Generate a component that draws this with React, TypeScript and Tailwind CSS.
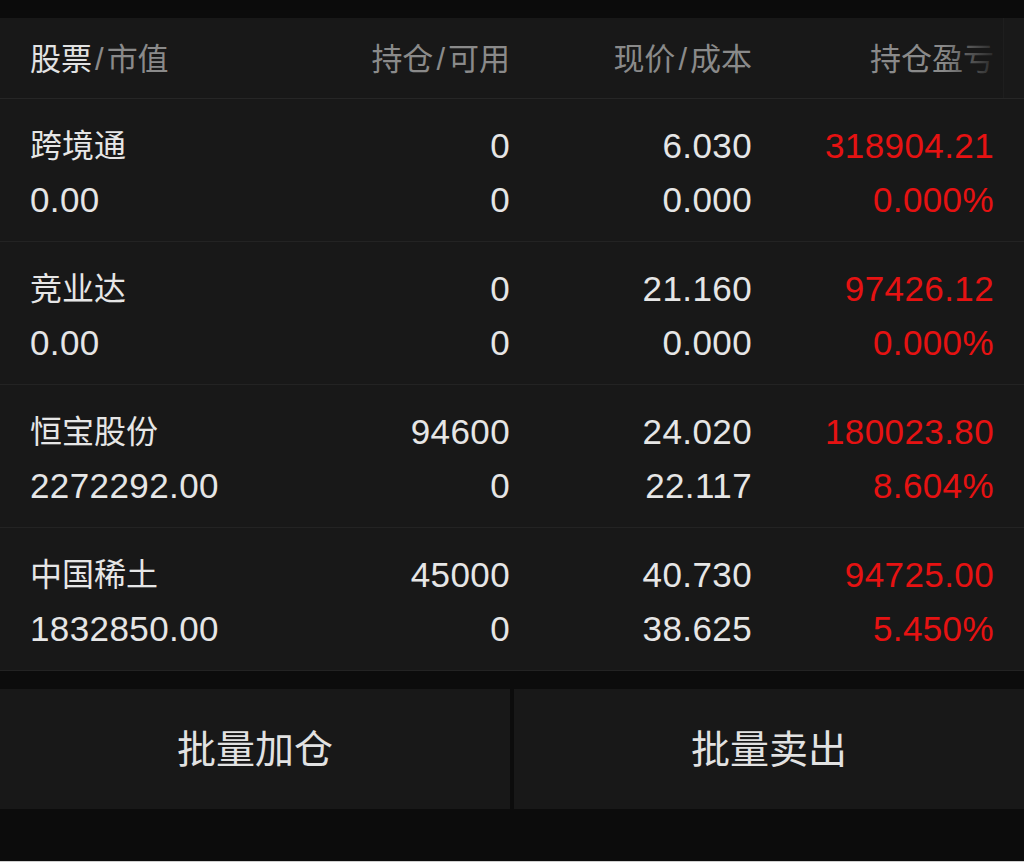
import React from "react";

const rows = [
  { name: "跨境通", mv: "0.00", pos: "0", avail: "0", price: "6.030", cost: "0.000", pl: "318904.21", pct: "0.000%" },
  { name: "竞业达", mv: "0.00", pos: "0", avail: "0", price: "21.160", cost: "0.000", pl: "97426.12", pct: "0.000%" },
  { name: "恒宝股份", mv: "2272292.00", pos: "94600", avail: "0", price: "24.020", cost: "22.117", pl: "180023.80", pct: "8.604%" },
  { name: "中国稀土", mv: "1832850.00", pos: "45000", avail: "0", price: "40.730", cost: "38.625", pl: "94725.00", pct: "5.450%" },
];

const font = { fontFamily: '"Liberation Sans", "Noto Sans CJK SC", sans-serif' };

export default function App() {
  return (
    <div className="w-[1024px] h-[862px] bg-[#0c0c0c] flex flex-col overflow-hidden" style={font}>
      <div className="h-[18px] shrink-0 bg-[#0b0b0b]" />
      {/* header */}
      <div className="relative h-[81px] shrink-0 bg-[#181818] border-b border-[#262626] flex items-center pt-[5px] pl-[30px] text-[31px] text-[#8a8a8a]">
        <div className="w-[240px]">
          <span className="text-[#e2e2e2]">股票</span>
          <span className="mx-[3px]">/</span>市值
        </div>
        <div className="w-[240px] text-right">持仓<span className="mx-[3px]">/</span>可用</div>
        <div className="w-[242px] text-right">现价<span className="mx-[3px]">/</span>成本</div>
        <div className="w-[242px] text-right whitespace-nowrap">持仓盈亏</div>
        <div className="absolute right-[21px] top-0 h-full w-[60px] bg-gradient-to-r from-transparent to-[#181818]" />
        <div className="absolute right-0 top-0 h-full w-[21px] bg-[#191919] border-l border-[#1e1e1e]" />
      </div>
      {/* rows */}
      <div className="flex flex-col bg-[#181818]">
        {rows.map((r) => (
          <div key={r.name} className="h-[143px] border-b border-[#232323] pt-[20px] pl-[30px] flex text-[35px] tracking-[0.4px] leading-[54px] text-[#e6e6e6]">
            <div className="w-[240px] flex flex-col">
              <span className="text-[32px] tracking-normal">{r.name}</span>
              <span>{r.mv}</span>
            </div>
            <div className="w-[240px] flex flex-col text-right">
              <span>{r.pos}</span>
              <span>{r.avail}</span>
            </div>
            <div className="w-[242px] flex flex-col text-right">
              <span>{r.price}</span>
              <span>{r.cost}</span>
            </div>
            <div className="w-[242px] flex flex-col text-right text-[#e61212]">
              <span>{r.pl}</span>
              <span>{r.pct}</span>
            </div>
          </div>
        ))}
      </div>
      <div className="h-[18px] shrink-0" />
      {/* buttons */}
      <div className="h-[120px] shrink-0 flex gap-[4px]">
        <div className="w-[510px] bg-[#181818] flex items-center justify-center pt-[3px] text-[39px] text-[#e2e2e2]">批量加仓</div>
        <div className="flex-1 bg-[#181818] flex items-center justify-center pt-[3px] text-[39px] text-[#e2e2e2]">批量卖出</div>
      </div>
      <div className="flex-1" />
      <div className="h-[1px] shrink-0 bg-[#cfcfcf]" />
    </div>
  );
}
